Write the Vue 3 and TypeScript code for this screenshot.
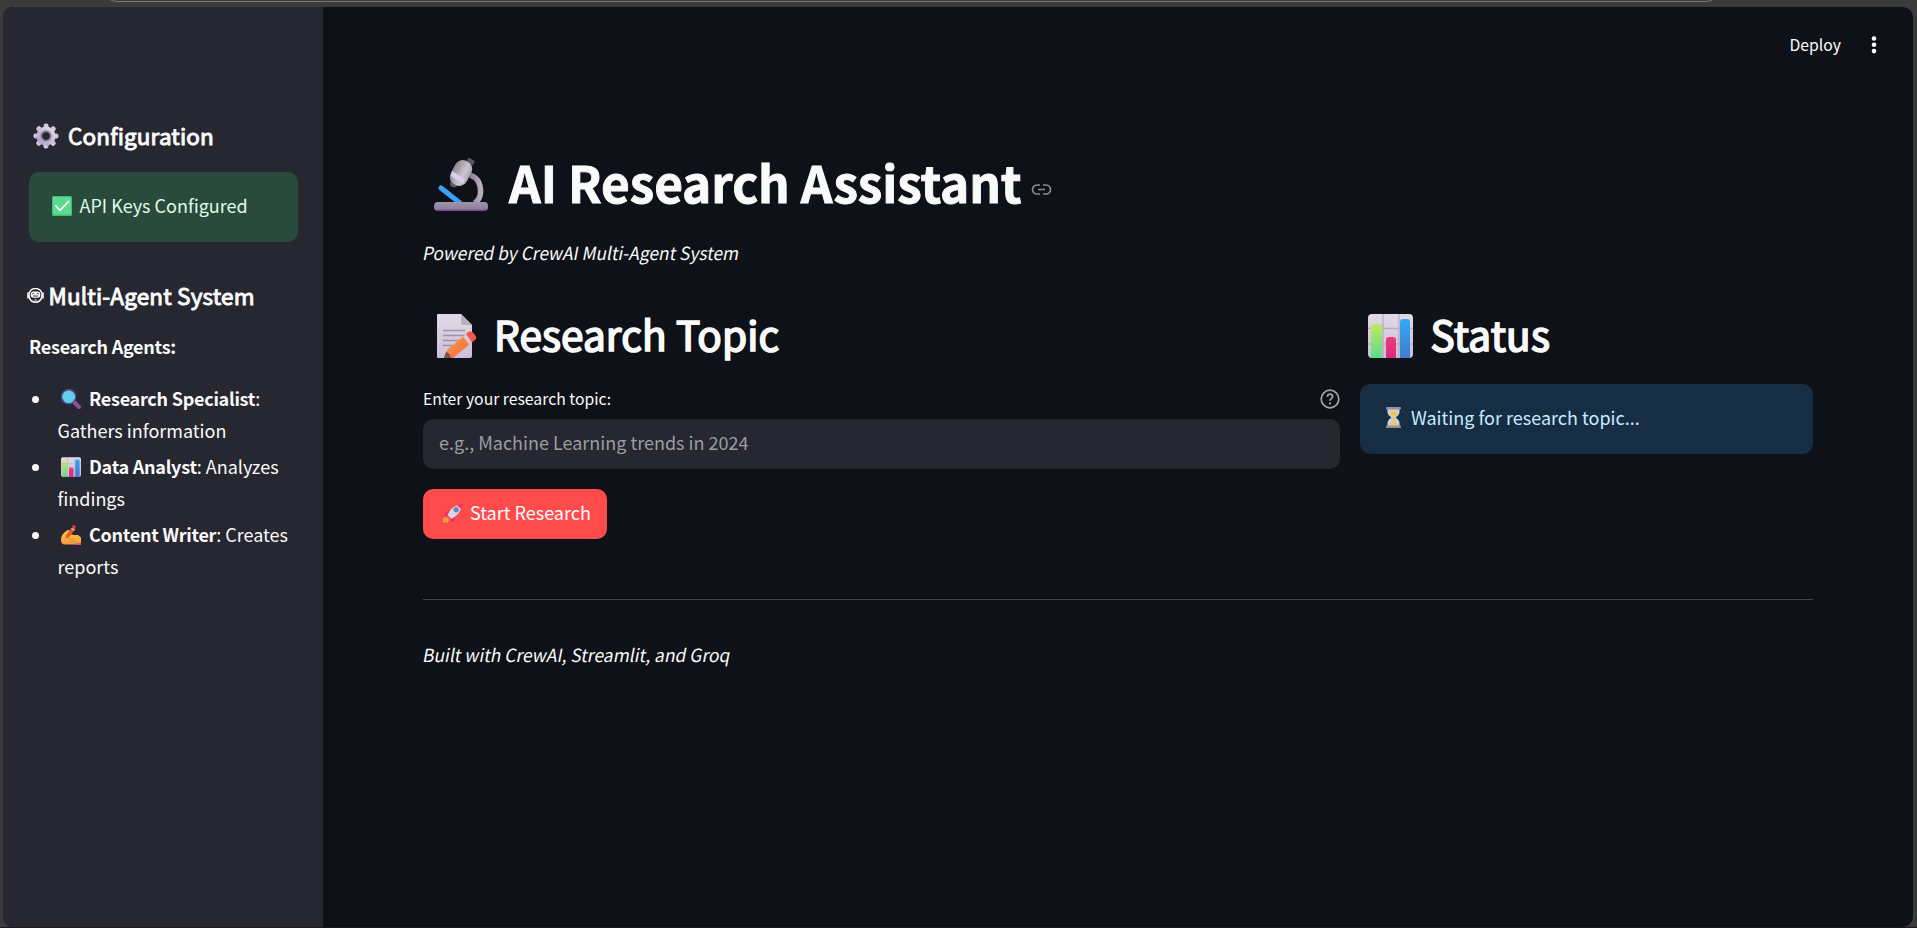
<script setup lang="ts">
interface Agent {
  icon: 'search' | 'chart' | 'writing'
  name: string
  first: string
  second: string
}

const agents: Agent[] = [
  { icon: 'search', name: 'Research Specialist', first: ':', second: 'Gathers information' },
  { icon: 'chart', name: 'Data Analyst', first: ': Analyzes', second: 'findings' },
  { icon: 'writing', name: 'Content Writer', first: ': Creates', second: 'reports' },
]
const gearTeeth = [0, 45, 90, 135, 180, 225, 270, 315]
</script>

<template>
  <svg class="defs" width="0" height="0" aria-hidden="true">
    <defs>
      <linearGradient id="lilac" x1="0" y1="1" x2="1" y2="0">
        <stop offset="0" stop-color="#b5a3cc" />
        <stop offset="1" stop-color="#e0d7e8" />
      </linearGradient>
      <linearGradient id="paper" x1="0" y1="0" x2="0" y2="1">
        <stop offset="0" stop-color="#e2d9e9" />
        <stop offset="1" stop-color="#cbbfd5" />
      </linearGradient>
      <linearGradient id="lime" x1="0" y1="0" x2="0" y2="1">
        <stop offset="0" stop-color="#c0e95a" />
        <stop offset="1" stop-color="#5bdc91" />
      </linearGradient>
      <linearGradient id="pink" x1="0" y1="0" x2="0" y2="1">
        <stop offset="0" stop-color="#ef3a78" />
        <stop offset="1" stop-color="#d92a7d" />
      </linearGradient>
      <linearGradient id="azure" x1="0" y1="0" x2="0" y2="1">
        <stop offset="0" stop-color="#35a9f5" />
        <stop offset="1" stop-color="#4279d3" />
      </linearGradient>
      <linearGradient id="steel" x1="0" y1="0" x2="1" y2="0">
        <stop offset="0" stop-color="#8d8891" />
        <stop offset=".65" stop-color="#cbc7cd" />
        <stop offset="1" stop-color="#aaa5b0" />
      </linearGradient>
      <linearGradient id="arm" x1="0" y1="0" x2="1" y2="0">
        <stop offset="0" stop-color="#8d7a9b" />
        <stop offset="1" stop-color="#b9aebf" />
      </linearGradient>
      <linearGradient id="base" x1="0" y1="0" x2="0" y2="1">
        <stop offset="0" stop-color="#a093a8" />
        <stop offset=".75" stop-color="#937fa2" />
        <stop offset="1" stop-color="#663f81" />
      </linearGradient>
      <linearGradient id="orange" x1="0" y1="0" x2="1" y2="1">
        <stop offset="0" stop-color="#ffa24b" />
        <stop offset="1" stop-color="#ee6538" />
      </linearGradient>
      <linearGradient id="hand" x1="0" y1="0" x2="0" y2="1">
        <stop offset="0" stop-color="#ffcf38" />
        <stop offset="1" stop-color="#f09a45" />
      </linearGradient>
      <symbol id="chart" viewBox="0 0 45 44">
        <rect width="45" height="44" rx="4" fill="url(#paper)" />
        <path d="M15 0v44M31 0v44M0 14.500h45M0 30h45" stroke="#b8afbf" stroke-width="1.400" />
        <path d="M3 44V13q0-3 3-3h5q3 0 3 3v31z" fill="url(#lime)" />
        <path d="M18 44V26q0-3 3-3h4q3 0 3 3v18z" fill="url(#pink)" />
        <path d="M32 44V8q0-3 3-3h4q3 0 3 3v36z" fill="url(#azure)" />
      </symbol>
      <symbol id="search" viewBox="0 0 20 20">
        <path d="m13 13 5 5" stroke="#8d4f95" stroke-width="4" stroke-linecap="round" />
        <circle cx="7.700" cy="7.700" r="7" fill="#62cdec" stroke="#50529b" stroke-width="1.400" />
      </symbol>
      <symbol id="writing" viewBox="0 0 20 20">
        <path d="M0 15Q0 9 6 5.500q2-1 2.500 0L8 9l5 1 4 0 3 2.500v6l-6 1H4q-4 0-4-4.500z" fill="url(#hand)" />
        <path d="M14 18.200h6V20h-6z" fill="#d65a80" />
        <path d="M7 14h6M8 16.800h6" stroke="#e58c30" stroke-width="1" stroke-linecap="round" />
        <path d="M4.500 13.500 5 10l6-7.500 3 2L8 12z" fill="#f2552e" />
        <path d="m11 2.500.7-2.500 3 .8-.7 3.700z" fill="#e43545" />
        <path d="m10.500 3.200 3 2" stroke="#f3bbb4" stroke-width="1.100" />
      </symbol>
    </defs>
  </svg>

  <div class="shell">
    <div class="tabline"></div>
    <div class="window">
      <aside class="side">
        <h3 class="config">
          <svg class="gear" viewBox="0 0 26 26">
            <rect v-for="a in gearTeeth" :key="a" x="10.500" y=".5" width="5" height="7" rx="2" fill="url(#lilac)" :transform="`rotate(${a} 13 13)`" />
            <circle cx="13" cy="13" r="6.800" fill="none" stroke="url(#lilac)" stroke-width="5.600" />
            <circle cx="13" cy="13" r="4.900" fill="none" stroke="#8d829a" stroke-width="1.700" />
          </svg>
          <span>Configuration</span>
        </h3>
        <div class="alert success">
          <svg class="check" viewBox="0 0 20 20">
            <rect width="20" height="20" rx="1.500" fill="#3fbd75" />
            <rect x="1" y="1" width="18" height="17.500" rx="1" fill="#5bdb92" />
            <path d="m4 10 4 4.500 8.500-9" fill="none" stroke="#fff" stroke-width="1.800" stroke-linecap="round" stroke-linejoin="round" />
          </svg>
          <span>API Keys Configured</span>
        </div>
        <h3 class="multi">
          <svg class="bot" viewBox="0 0 17 16">
            <path d="M4 2Q8.500-1 13 2q2 2 2 5 0 4-2.500 6-4 2.500-8 0Q2 11 2 7q0-3 2-5z" fill="none" stroke="#fafafa" stroke-width="1.500" />
            <path d="M1 5v5M16 5v5" stroke="#fafafa" stroke-width="1.600" stroke-linecap="round" />
            <rect x="3.700" y="3.500" width="9.600" height="6.300" rx="2.700" fill="#fafafa" />
            <path d="M5.200 6q1-1.300 2 0M9.800 6q1-1.300 2 0M6 8h5" fill="none" stroke="#262730" stroke-width=".9" />
            <path d="M7.500 12h2" stroke="#fafafa" stroke-width="1.200" />
          </svg>
          <span>Multi-Agent System</span>
        </h3>
        <p class="agents-title"><strong>Research Agents:</strong></p>
        <ul>
          <li v-for="agent in agents" :key="agent.name">
            <div class="line">
              <svg class="agent-icon"><use :href="`#${agent.icon}`" /></svg>
              <strong>{{ agent.name }}</strong><span>{{ agent.first }}</span>
            </div>
            <div class="line">{{ agent.second }}</div>
          </li>
        </ul>
      </aside>

      <main>
        <header>
          <span>Deploy</span>
          <svg class="dots" viewBox="0 0 6 18">
            <circle cx="3" cy="2.500" r="2.300" /><circle cx="3" cy="8.800" r="2.300" /><circle cx="3" cy="15.100" r="2.300" />
          </svg>
        </header>
        <section class="content">
          <h1>
            <svg class="microscope" viewBox="0 0 54 54">
              <path d="M36 18q11 4 10.500 17 0 7-6 11" fill="none" stroke="url(#arm)" stroke-width="5.500" />
              <path d="m7 31 19 15" stroke="#3ba2f3" stroke-width="5" stroke-linecap="round" />
              <path d="m17 23 7 4-2 3q-5 1-6-3z" fill="#5f5a68" />
              <path d="m32 4 3-3.500 6 4L38 9z" fill="#5a565c" />
              <rect x="18" y="3" width="18" height="26" rx="8" fill="url(#steel)" transform="rotate(28 27 16)" />
              <path d="m18 14 13 8-2 5-12-8z" fill="#ddcdec" />
              <rect y="45" width="54" height="9" rx="4" fill="url(#base)" />
            </svg>
            <span class="title">AI Research Assistant</span>
            <svg class="link" viewBox="0 0 20 11">
              <path d="M8.500 1H5.500a4.500 4.500 0 0 0 0 9h3M11.500 1h3a4.500 4.500 0 0 1 0 9h-3M6.500 5.500h7" fill="none" stroke="#8a8c90" stroke-width="1.700" />
            </svg>
          </h1>
          <p class="tagline"><em>Powered by CrewAI Multi-Agent System</em></p>

          <div class="columns">
            <div>
              <h2>
                <svg class="memo" viewBox="0 0 40 44">
                  <path d="M0 1q0-1 1-1h23l11 11v31q0 2-2 2H1q-1 0-1-1z" fill="url(#paper)" />
                  <path d="M24 0v9q0 2 2 2h9z" fill="#b8b0bd" />
                  <path d="M6 16.500h22M6 21.500h22M6 26.500h17M6 31.500h13" stroke="#9c94a4" stroke-width="1.500" />
                  <path d="m7 44 3-8 18-15 6 8-18 15z" fill="url(#orange)" />
                  <path d="m7 44 2-6q4 1 5 6z" fill="#72505c" />
                  <path d="m26 22.500 3-2.500 6 8-3 2.500z" fill="#d7cbd9" />
                  <path d="m29 20 3-2.500q2-1 4 1l3 4q1 2-1 3.500L35 28.500z" fill="#f4584d" />
                </svg>
                <span>Research Topic</span>
              </h2>
              <div class="label">
                <label for="topic">Enter your research topic:</label>
                <svg class="help" viewBox="0 0 20 20">
                  <circle cx="10" cy="10" r="8.800" />
                  <path d="M7.400 7.800Q7.400 5.200 10 5.200t2.600 2.400q0 1.300-1.300 2.100T10 11.700" />
                  <circle class="point" cx="10" cy="14.400" r="1.100" />
                </svg>
              </div>
              <input id="topic" type="text" placeholder="e.g., Machine Learning trends in 2024" />
              <button type="button">
                <svg class="rocket" viewBox="0 0 20 20">
                  <path d="M7 7 2 9.500l-.5 4L6 12zM13 13l-2 5.500-3.500.5L8 14z" fill="#e5316c" />
                  <path d="M4.500 12.500Q7 3.500 19 1q-1 10.500-11 15z" fill="#dcd4e4" />
                  <path d="M14 2.500Q17 .5 20 0q-.2 3-1.800 6z" fill="#e93569" />
                  <path d="m4.500 12 4 4-3 1-2-2z" fill="#f3458a" />
                  <path d="M0 15q3-2 5 0t0 4.500H0z" fill="#f79738" />
                  <circle cx="13.200" cy="6.800" r="2.200" fill="#35a0e8" stroke="#77749a" />
                </svg>
                <span>Start Research</span>
              </button>
            </div>
            <div>
              <h2 class="status">
                <svg class="chart"><use href="#chart" /></svg>
                <span>Status</span>
              </h2>
              <div class="alert info">
                <svg class="hourglass" viewBox="0 0 15 21">
                  <path d="M1.500 2h12v3q0 3-4 5.500 4 2.500 4 5.500v3h-12v-3q0-3 4-5.500-4-2.500-4-5.500z" fill="#bdd6e8" />
                  <path d="M3 4.500h9q0 3-3.500 5v5q3 1 3.500 4H3q.5-3 3.500-4v-5Q3 7.500 3 4.500z" fill="#fbc35c" />
                  <rect width="15" height="2.500" rx=".8" fill="#9a8d98" />
                  <rect y="18.500" width="15" height="2.500" rx=".8" fill="#9a8d98" />
                </svg>
                <span>Waiting for research topic...</span>
              </div>
            </div>
          </div>
          <hr />
          <p class="footer"><em>Built with CrewAI, Streamlit, and Groq</em></p>
        </section>
      </main>
    </div>
  </div>
</template>

<style>
body {
  background: #3b3b3b;
  overflow: hidden;
}
</style>

<style scoped>
* {
  box-sizing: border-box;
  margin: 0;
  padding: 0;
}
.defs {
  position: absolute;
}
svg {
  display: block;
  flex: none;
}
.shell {
  height: 928px;
  padding: 0 4px 0 3px;
  background: #3b3b3b;
  border-bottom: 1px solid #1d171f;
  color: #fafafa;
  font: 18px/32px "Noto Sans CJK JP", "Noto Sans CJK SC", "Open Sans", sans-serif;
  white-space: nowrap;
}
.tabline {
  display: flex;
  align-items: flex-end;
  width: 1617px;
  height: 7px;
  margin-left: 100px;
  padding-bottom: 5px;
  overflow: hidden;
}
.tabline::before {
  content: "";
  flex: 1;
  height: 30px;
  border: 1px solid #777;
  border-radius: 14px;
}
.window {
  display: flex;
  height: 920px;
  overflow: hidden;
  border-radius: 10px;
  background: #0e1117;
}
.side {
  width: 320px;
  padding: 113px 25px 0 26px;
  background: #262730;
}
h2,
h3 {
  font-weight: 400;
}
h3 {
  display: flex;
  align-items: center;
  height: 30px;
  font-size: 22.5px;
  line-height: 30px;
  letter-spacing: 0.15px;
  -webkit-text-stroke: 0.95px #fafafa;
}
strong {
  font-weight: 700;
  letter-spacing: -0.26px;
}
.config {
  padding-left: 4px;
}
.gear {
  width: 26px;
  height: 26px;
  margin: 2px 9px 0 0;
}
.alert {
  display: flex;
  height: 70px;
  padding: 20px 22px;
  border-radius: 10px;
  line-height: 26px;
}
.success {
  margin-top: 22px;
  padding-left: 23px;
  background: #2a4a3b;
  color: #dffde9;
}
.check {
  width: 20px;
  height: 20px;
  margin: 4px 7.5px 0 0;
}
.multi {
  margin-top: 38px;
  letter-spacing: 0.17px;
}
.bot {
  width: 17px;
  height: 16px;
  margin: 2px 4.5px 0 -2px;
}
.agents-title {
  margin: 20px 0;
}
ul {
  list-style: none;
}
li {
  margin-bottom: 4px;
  padding-left: 28.5px;
}
.line {
  display: flex;
  height: 32px;
}
.line:first-child::before {
  content: "";
  width: 7px;
  height: 7px;
  margin: 14px 26px 0 -26px;
  border-radius: 50%;
  background: #fafafa;
}
.agent-icon {
  width: 20px;
  height: 20px;
  margin: 7px 8px 0 -3.5px;
}
main {
  flex: 1;
  min-width: 0;
}
header {
  display: flex;
  justify-content: flex-end;
  height: 60px;
  padding: 25px 36.5px 0 0;
  font-size: 15.75px;
  line-height: 26px;
}
.dots {
  width: 6px;
  height: 18px;
  margin: 4px 0 0 29.5px;
  fill: #fafafa;
}
.content {
  padding: 81px 100px 0;
}
h1 {
  display: flex;
  height: 66px;
  padding-left: 11px;
  font-size: 49.5px;
  font-weight: 700;
  line-height: 68px;
}
.title {
  letter-spacing: -0.1px;
  -webkit-text-stroke: 0.9px #fafafa;
}
.microscope {
  width: 54px;
  height: 54px;
  margin: 9px 21px 0 0;
}
.link {
  width: 21px;
  height: 11px;
  margin: 35.5px 0 0 9.5px;
}
.tagline {
  margin-top: 22px;
}
em {
  display: inline-block;
  margin-left: -1px;
  font-style: normal;
  transform-origin: 0 75%;
  transform: skewX(-11deg) scaleX(0.964);
}
.footer em {
  transform: skewX(-11deg) scaleX(0.971);
}
.columns {
  display: grid;
  grid-template-columns: 917px 453px;
  gap: 20px;
  margin-top: 39px;
}
h2 {
  display: flex;
  height: 54px;
  padding-left: 14px;
  font-size: 40.5px;
  line-height: 54px;
  letter-spacing: 0.12px;
  -webkit-text-stroke: 1.7px #fafafa;
}
.memo {
  width: 40px;
  height: 44px;
  margin: 7px 17px 0 0;
}
.status {
  padding-left: 8px;
  letter-spacing: 0.2px;
}
.chart {
  width: 45px;
  height: 44px;
  margin: 7px 17.5px 0 0;
}
.label {
  display: flex;
  justify-content: space-between;
  height: 26px;
  margin: 24px 0 8px;
  font-size: 15.75px;
  line-height: 27px;
}
.help {
  width: 20px;
  height: 20px;
  margin-top: 4px;
  fill: none;
  stroke: #a3a4a8;
  stroke-width: 1.7;
}
.help .point {
  fill: #a3a4a8;
  stroke: none;
}
input {
  display: block;
  width: 100%;
  height: 50px;
  padding: 0 16px 4px;
  border: 0;
  border-radius: 10px;
  outline: 0;
  background: #262730;
  color: #fafafa;
  font: inherit;
}
input::placeholder {
  color: #9c9da1;
  opacity: 1;
}
button {
  display: flex;
  width: 184px;
  height: 50px;
  margin-top: 20px;
  padding: 10px 0 0 20px;
  border: 0;
  border-radius: 10px;
  background: #ff4b4b;
  color: #fff;
  font: inherit;
  line-height: 26px;
}
.rocket {
  width: 20px;
  height: 20px;
  margin: 4px 7px 0 0;
}
.info {
  margin-top: 23px;
  padding-left: 26px;
  background: #172d43;
  color: #c7ebff;
}
.hourglass {
  width: 15px;
  height: 21px;
  margin: 3px 10px 0 0;
}
hr {
  height: 1px;
  margin-top: 60px;
  border: 0;
  background: #414345;
}
.footer {
  margin-top: 38px;
}
</style>
